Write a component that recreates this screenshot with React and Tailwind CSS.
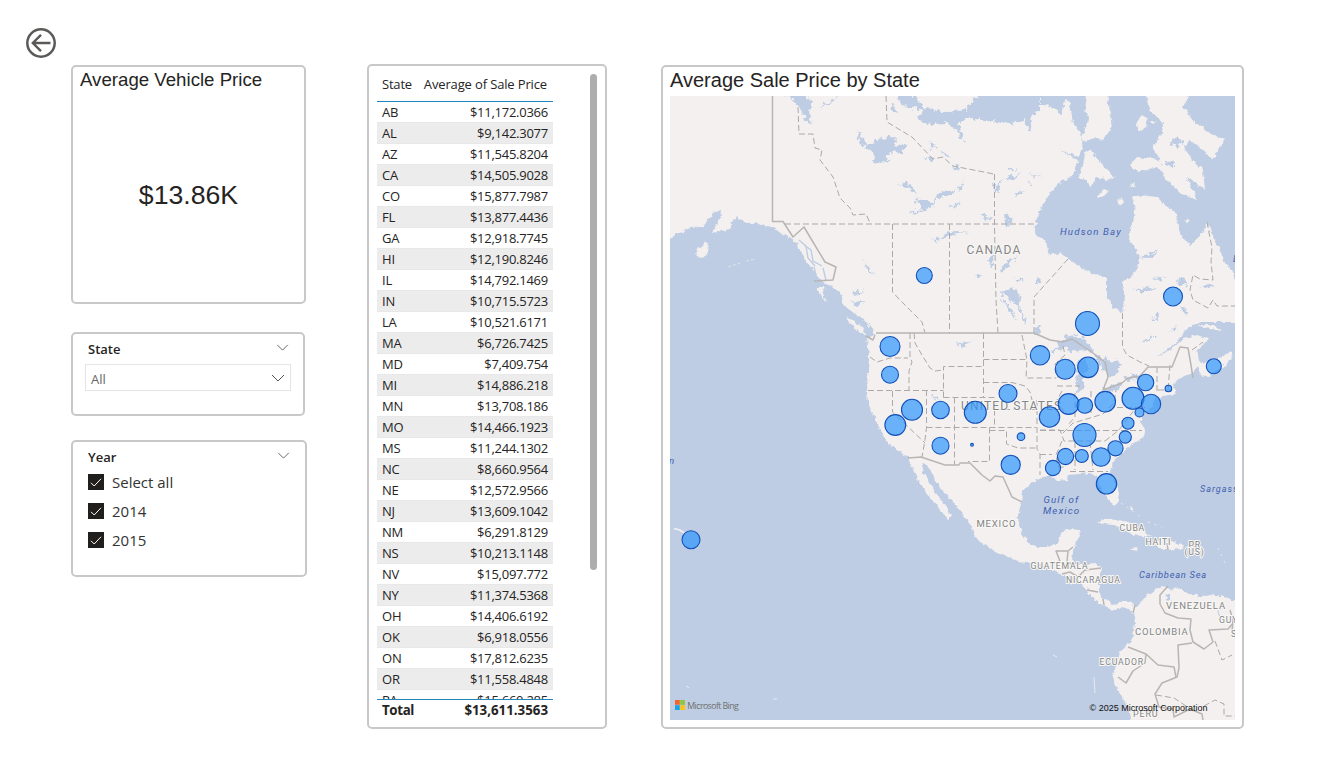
import React from "react";

const rows = [
  ["AB", "$11,172.0366"], ["AL", "$9,142.3077"], ["AZ", "$11,545.8204"], ["CA", "$14,505.9028"],
  ["CO", "$15,877.7987"], ["FL", "$13,877.4436"], ["GA", "$12,918.7745"], ["HI", "$12,190.8246"],
  ["IL", "$14,792.1469"], ["IN", "$10,715.5723"], ["LA", "$10,521.6171"], ["MA", "$6,726.7425"],
  ["MD", "$7,409.754"], ["MI", "$14,886.218"], ["MN", "$13,708.186"], ["MO", "$14,466.1923"],
  ["MS", "$11,244.1302"], ["NC", "$8,660.9564"], ["NE", "$12,572.9566"], ["NJ", "$13,609.1042"],
  ["NM", "$6,291.8129"], ["NS", "$10,213.1148"], ["NV", "$15,097.772"], ["NY", "$11,374.5368"],
  ["OH", "$14,406.6192"], ["OK", "$6,918.0556"], ["ON", "$17,812.6235"], ["OR", "$11,558.4848"],
  ["PA", "$15,660.285"],
];

// [x, y, radius]
const bubbles = [
  [924.3, 275.5, 8], [1173, 296.5, 9.5], [1087.5, 323.5, 12], [890, 346.5, 10], [890, 374.7, 8.5],
  [1040, 355.3, 9.7], [1065.2, 369.3, 10], [1088, 367.3, 10.3], [1213.8, 366.3, 7.5], [1145.6, 382.5, 8.2],
  [1168.4, 388.5, 3.3], [1008, 393.5, 9], [912, 409.7, 10.5], [895.3, 425, 10.4], [940.5, 410, 8.8],
  [975.3, 412.3, 11], [1049.5, 417, 10.2], [1068.6, 404, 10.4], [1084.8, 405.5, 7.8], [1105.2, 401.7, 10.3],
  [1133, 398.3, 11], [1151, 404, 9.7], [1139.5, 412.5, 4.5], [1128, 423.2, 6], [1125.3, 437, 6.1],
  [1115.5, 448.3, 7.6], [1084.5, 435, 11.5], [1065.5, 456.5, 8.1], [1081.8, 456, 6.5], [1101, 457, 9.3],
  [1053, 468, 7.6], [1106.5, 483.8, 10.2], [940.5, 445.7, 8.5], [972, 444.8, 1.4], [1021, 436.7, 3.8],
  [1010.7, 464.8, 9.6], [691, 539.8, 9],
];

const land = [
  // Mainland, from Alaska round the Pacific, the Gulf and the Atlantic coasts
  "M660 86L660 243L680 232L690 228L703 227L713 213L722 210L720 218L715 227L712 233L730 229L736 216L742 222L753 223L772 227L785 235L797 243L803 257L813 270L823 282L833 287L840 293L843 306L850 310L867 323L875 335L867 338L869 357L868 373L867 390L868 403L875 418L880 430L888 443L898 450L908 458L913 470L918 480L925 490L932 500L942 512L948 519L951 517L947 507L938 497L932 487L925 475L921 463L928 465L935 480L945 493L957 507L967 520L972 528L973 533L977 540L993 550L1010 558L1025 563L1037 562L1050 570L1063 575L1077 578L1085 588L1092 598L1103 605L1113 611L1120 607L1128 608L1135 615L1135 623L1133 637L1128 645L1120 652L1118 660L1113 675L1115 687L1123 698L1130 713L1133 730L1245 730L1245 606L1228 598L1217 595L1200 596L1187 593L1177 587L1172 590L1163 587L1155 590L1145 597L1137 607L1130 602L1120 602L1113 605L1103 598L1099 592L1099 580L1101 568L1095 563L1083 565L1072 564L1073 550L1077 540L1081 531L1073 529L1062 531L1058 543L1047 547L1037 547L1028 542L1022 533L1017 520L1020 507L1022 502L1021 492L1032 483L1043 477L1050 475L1057 481L1067 480L1068 475L1080 474L1090 473L1097 477L1100 487L1108 498L1114 507L1118 503L1119 493L1115 483L1110 472L1113 462L1122 453L1132 444L1144 437L1145 430L1140 423L1143 415L1152 407L1155 398L1163 396L1175 394L1177 390L1172 387L1177 380L1192 373L1198 366L1202 376L1207 377L1222 367L1233 358L1223 361L1213 358L1203 364L1199 361L1197 350L1205 343L1208 338L1197 335L1183 339L1170 350L1157 357L1177 342L1187 328L1200 322L1245 322L1245 285L1235 280L1232 270L1223 260L1220 250L1213 237L1207 222L1203 233L1190 245L1183 238L1178 228L1177 213L1167 207L1157 197L1140 195L1132 197L1135 210L1133 223L1128 238L1137 250L1139 260L1135 273L1122 282L1125 300L1123 313L1113 307L1107 295L1107 277L1090 273L1073 262L1060 253L1050 255L1045 240L1036 237L1035 230L1037 217L1043 203L1057 185L1073 175L1078 160L1060 150L1079 157L1083 147L1080 133L1073 123L1070 103L1065 100L1062 115L1053 107L1040 104L1040 86Z",
  // Melville peninsula, Southampton, Baffin
  "M1088 86L1108 86L1109 105L1112 128L1103 140L1094 138L1085 142L1081 138L1089 120L1085 110Z",
  "M1085 152L1091 150L1100 163L1108 170L1115 177L1107 180L1097 177L1090 187L1086 180L1078 178L1083 166Z",
  "M1143 86L1193 86L1183 107L1193 120L1207 132L1225 140L1218 150L1212 160L1203 150L1190 140L1183 147L1193 160L1203 170L1205 190L1187 177L1198 200L1180 193L1167 180L1158 167L1137 172L1130 165L1137 157L1160 160L1152 148L1162 133L1163 123L1150 110Z",
  "M1136 122L1142 115L1148 118L1146 127L1139 131Z",
  "M1097 197L1104 189L1109 191L1103 197Z M1118 201L1122 197L1123 203L1120 206Z M1130 186L1135 182L1134 187Z M1150 121L1157 121L1153 124Z M1185 221L1189 218L1188 223Z",
  // Kodiak, Haida Gwaii, Vancouver Island
  "M695 252L706 242L709 246L708 253L700 259Z M817 287L825 287L822 294L827 303L820 295Z M845 317L852 320L860 325L867 336L858 331L851 325Z",
  "M1197 325L1214 325L1222 331L1210 329Z M1185 365L1192 363L1198 366L1190 367Z",
  "M1199 366L1206 364L1214 362L1222 357L1230 352L1233 356L1226 364L1213 372L1203 377L1199 373Z",
  // Caribbean
  "M1094 523L1107 518L1127 523L1153 537L1133 535L1117 526L1100 523Z M1152 543L1163 538L1183 545L1182 549L1165 550Z M1129 549L1138 548L1136 551Z M1190 549L1201 548L1200 551Z M1130 508L1132 506L1133 511Z",
];

const lakes = [
  // Arctic channels
  "M782 90L802 90L812 104L808 114L800 107Z M893 92L908 92L925 107L945 112L966 110L975 98L990 92L1040 92L1040 112L1030 116L1032 132L1023 120L1008 124L984 120L966 118L958 123L965 143L950 123L924 124L917 117L924 111L902 105Z",
  "M802 110L808 108L812 122L808 125L804 117Z M819 109L832 99L838 96L828 105Z",
  // Great Bear, Great Slave, Athabasca
  "M864 147L880 138L897 136L894 145L906 144L902 154L890 152L886 162L874 163L875 155Z M856 129L861 135L867 148L861 144Z M896 112L893 104L890 109Z",
  "M908 212L922 209L916 199L932 202L940 192L958 190L948 196L936 199L932 207L921 210L917 214Z M899 185L906 182L914 188L916 192L908 189Z M957 190L963 182L965 174L962 188Z",
  "M942 236L951 231L971 233L955 234L945 238Z M1001 270L1007 262L1016 256L1010 264L1003 272Z M934 240L940 237L938 243Z",
  "M1001 292L1010 288L1018 291L1021 302L1017 308L1012 302L1006 297Z M1000 296L1008 304L1017 321L1008 310Z M1015 300L1026 320L1024 323Z M1034 328L1040 326L1041 334L1035 333Z",
  "M994 185L1001 180L1000 189L995 194Z M1006 169L1018 169L1009 172Z M1028 172L1044 178L1033 175Z M1004 178L1020 174L1010 181Z M1014 193L1023 191L1018 196Z M1028 182L1036 188L1030 186Z M1005 214L1012 217L1010 227L1006 222Z M980 214L992 218L986 222Z M951 168L962 165L957 171Z M949 207L960 202L955 208Z M941 150L951 158L946 158Z M930 142L935 145L931 151Z M924 157L934 158L931 161Z M989 259L994 250L993 264L990 268Z M976 276L982 274L979 278Z M1014 278L1023 279L1018 283Z M1036 280L1043 278L1038 286Z M863 259L870 269L875 278L866 267Z M850 292L864 290L856 296Z M852 302L866 301L857 306Z M955 343L971 342L961 346Z M931 393L937 398L938 401L933 397Z M854 313L862 318L873 330L861 321Z",
  "M1138 257L1149 254L1159 250L1150 258Z M1132 290L1145 287L1158 289L1145 292Z M1153 278L1167 276L1159 280Z M1175 282L1183 277L1189 285L1179 286Z M1201 287L1209 284L1216 286L1208 289Z M1152 320L1160 312L1157 320Z M1181 308L1188 309L1185 317Z M1142 340L1156 336L1148 342Z M1170 332L1177 325L1175 330Z M1173 136L1182 139L1179 147L1171 145Z M1163 160L1173 161L1173 168L1166 166Z M1101 145L1111 143L1107 149Z",
  // Alaska inlets
  "M690 232L703 226L710 229L699 240L684 244L681 240Z M715 220L722 212L719 216Z",
  // Great Lakes
  "M1050 352L1060 343L1068 335L1083 337L1093 348L1091 352L1080 350L1070 352L1064 347L1053 353Z M1078 362L1088 357L1087 368L1083 378L1083 390L1077 391L1076 377Z M1093 355L1101 357L1110 362L1120 360L1118 373L1108 378L1104 370L1100 365Z M1103 390L1113 385L1120 383L1123 386L1112 392Z M1124 378L1131 375L1140 375L1138 380L1127 381Z",
  "M1167 593L1172 597L1170 603L1166 599Z M1218 610L1222 607L1219 615Z M1086 587L1095 592L1091 591Z",
];

const dashed = [
  "M785 224H1035", "M892.5 224V292L900 300L913 313L922 322L925 333", "M949.5 224V333", "M994.5 174V224L996 300L998 333",
  "M1068 259L1034 297V333", "M886 96L887 122L912 137L933 159L943 157L953 166L994 174",
  "M798 107L799 134H813L815 148L822 150L820 160L833 177L840 198L850 208L853 215L866 214L870 223",
  "M870 357L877 362L890 358L908 358", "M910 333V357L912 362L909 371V390", "M868 390.5H943.5",
  "M914 333L915 343L922 355L930 368L935 371L943 370", "M943.5 397.5V366.5H983.5", "M943.5 397.5H994.5V427.5", "M983.5 333V397.5",
  "M983.5 359.5H1027", "M983.5 382.5H1012L1025 386L1030 392L1032 400", "M1022 335L1027 360L1026 378H1056",
  "M926.5 390V427.5L925 440L922 457", "M892.5 391V412L925 443", "M926.5 427.5H1036", "M954.5 397.5V465", "M989.5 427.5V461.5H968",
  "M989.5 430.5H1006.5V444L1018 448H1036", "M995 409.5H1036", "M1037 400V449L1040 454V475", "M1040 430.5H1142", "M1040 454.5H1052",
  "M1040 430L1060 430L1064 441H1105", "M1062 441L1056 455L1058 467H1064", "M1075 442V470", "M1090 442L1093 470", "M1070 471.5H1108",
  "M1063 433L1073 423L1090 418L1103 414L1114 403L1116 390", "M1117 407.5H1145", "M1157 367V393", "M1170 365L1168 390", "M1158 390H1172",
  "M1057 386H1080", "M1091 391V413", "M1075 393V417L1068 425", "M1062 391L1057 400L1065 414", "M1105 441L1119 430L1135 409",
  "M1122.5 313V347L1127 355L1140 362L1149 366", "M1063 346L1065 355L1055 364L1058 378",
  "M1207 222L1210 238L1212 247L1211 262L1213 280L1200 279L1193 275L1190 290L1193 300L1208 308L1213 300L1217 306H1235",
  "M1215 641L1222 660L1232 655", "M1156 695L1174 698L1186 706", "M1204 706L1215 700L1224 704L1224 716H1235", "M1192 350L1203 342",
];

const borders = [
  "M772.5 96V221.5L783 221.5L793 237L804 227L810 237L825 262L836 267L833 280L814 281", "M876 333H1034L1050 340L1063 342L1072 339L1093 353L1105 362L1108 377L1103 390L1122 383L1128 378L1140 376L1148 367H1172L1180 347L1188 348L1191 365L1193 378",
  "M866 336L873 340L875 335",
  "M908 458L921 457L945 465H959L960 463H970L982 475L990 481L995 476L1003 477L1012 497L1022 502",
  "M1073 547L1068 551L1056 551L1060 561L1052 564M1068 551L1067 562L1072 564M1062 574L1070 572L1078 577L1085 570L1101 568M1087 590L1098 592M1103 599L1104 605M1135 605L1133 613",
  "M1168 586L1160 595L1160 604L1165 613L1178 618L1191 619L1190 630L1193 642L1204 649L1213 642L1209 630L1228 629L1235 621", "M1192 643L1178 645L1179 668L1177 677L1162 683L1155 694L1159 707L1173 709L1174 717L1190 709L1202 714L1203 720",
  "M1128 647L1146 654L1158 665L1174 667L1176 677M1146 654L1145 663L1133 671L1126 683L1118 677", "M1230 610L1233 620L1232 632L1238 641", "M1167 543L1168 550",
];

// [text, x, y, size, letter spacing, water label]
const labels = [
  ["CANADA", 966.5, 254, 12, 1.2], ["UNITED STATES", 961, 410, 12, 1.15], ["MEXICO", 976.5, 527, 9.5, 0.8],
  ["GUATEMALA", 1030.5, 569, 8.7, 0.85], ["NICARAGUA", 1066, 583, 8.7, 0.75], ["CUBA", 1119.5, 531, 8.7, 0.8],
  ["HAITI", 1145.5, 545, 8.7, 0.8], ["PR", 1188.5, 547.5, 8.7, 0.8], ["(US)", 1184.5, 555, 8.7, 0.8],
  ["VENEZUELA", 1166, 609, 9.5, 0.85], ["COLOMBIA", 1135, 635, 9.5, 0.8], ["ECUADOR", 1099.5, 665, 8.7, 0.8],
  ["PERU", 1133, 717, 9, 0.8], ["GUYANA", 1219, 623, 8.7, 0.8], ["S", 1231, 637, 8.7, 0.8],
  ["Hudson Bay", 1060, 235, 9.7, 1.15, true], ["Gulf of", 1043.5, 503, 9.7, 1.1, true], ["Mexico", 1043, 514, 9.7, 1.15, true],
  ["Sargasso Sea", 1200, 492, 9, 1, true], ["Caribbean Sea", 1139, 578, 9.3, 0.75, true], ["n", 669, 464, 9.7, 0, true], ["L", 1233, 262, 9.7, 0, true],
];

function Chevron({ className }) {
  return (
    <svg className={className} viewBox="0 0 14 8" fill="none" stroke="#555" strokeWidth="1">
      <path d="M1 1L7 7L13 1" />
    </svg>
  );
}

function BackButton() {
  return (
    <svg className="block h-[30px] w-[30px]" viewBox="0 0 30 30" fill="none" stroke="#5c5a58">
      <circle cx="15" cy="15" r="13.7" strokeWidth="2.5" />
      <path d="M24.5 15H7.5M15 6.8L6.8 15L15 23.2" strokeWidth="2.4" />
    </svg>
  );
}

function CheckRow({ label }) {
  return (
    <div className="flex h-[29px] items-center gap-2 text-[15px] leading-5 text-[#333]">
      <svg className="h-4 w-4" viewBox="0 0 16 16" fill="none">
        <rect width="16" height="16" fill="#201f1e" />
        <path d="M3 8.8L6.2 12L13 4.8" stroke="#fff" />
      </svg>
      <span className="pt-px">{label}</span>
    </div>
  );
}

function MapView() {
  return (
    <svg className="block h-[624px] w-[565px]" viewBox="670 96 565 624" fontFamily="Roboto, sans-serif">
      <defs>
        <filter id="coast" filterUnits="userSpaceOnUse" x="660" y="86" width="585" height="644" colorInterpolationFilters="sRGB">
          <feTurbulence type="fractalNoise" baseFrequency="0.2" numOctaves="3" seed="4" result="noise" />
          <feDisplacementMap in="SourceGraphic" in2="noise" scale="5" xChannelSelector="R" yChannelSelector="G" />
        </filter>
        <filter id="shore" filterUnits="userSpaceOnUse" x="660" y="86" width="585" height="644" colorInterpolationFilters="sRGB">
          <feTurbulence type="fractalNoise" baseFrequency="0.22" numOctaves="3" seed="9" result="noise" />
          <feDisplacementMap in="SourceGraphic" in2="noise" scale="9" xChannelSelector="R" yChannelSelector="G" />
        </filter>
      </defs>
      <rect x="670" y="96" width="565" height="624" fill="#becde3" />
      <g fill="#f3f0ef" filter="url(#coast)">
        {land.map((d) => <path key={d} d={d} />)}
      </g>
      <g fill="#becde3" filter="url(#shore)">
        {lakes.map((d) => <path key={d} d={d} />)}
      </g>
      <g fill="none" stroke="#f3f0ef">
        <path d="M674 528.5L680 530L686 534" strokeWidth="1.6" />
        <path d="M728 267L741 263M746 261L756 259" strokeWidth="0.6" strokeDasharray="3 2" />
        <path d="M1053 655L1057 657M773 699L777 699M686 686L689 688M1094 677L1095 693" strokeWidth="1" opacity=".8" />
        <path d="M799 240L806 246L808 258L815 266M804 245L811 250L813 261L822 266M814 267L817 280M823 268L826 280" stroke="#becde3" strokeWidth="1.4" />
        <path d="M1121 503L1141 517M1148 522L1162 527M1218 548L1226 565" strokeWidth="0.8" strokeDasharray="2 5" />
      </g>
      <g fill="none" stroke="#aca9a7" strokeWidth="1" strokeDasharray="6 3">
        {dashed.map((d) => <path key={d} d={d} />)}
      </g>
      <g fill="none" stroke="#b8b5b3" strokeWidth="1.5" strokeLinejoin="round">
        {borders.map((d) => <path key={d} d={d} />)}
      </g>
      {labels.map(([text, x, y, size, spacing, water]) => (
        <text
          key={text} x={x} y={y} fontSize={size} letterSpacing={spacing}
          fontStyle={water ? "italic" : "normal"} fontWeight={400}
          fill={water ? "#3f60b0" : "#858585"} stroke={water ? "none" : "#f8f7f6"}
          strokeWidth="2" paintOrder="stroke"
        >
          {text}
        </text>
      ))}
      <g fill="#2d96fc" fillOpacity=".7" stroke="#124fb8" strokeWidth="1.1">
        {bubbles.map(([x, y, r]) => <circle key={`${x}-${y}`} cx={x} cy={y} r={r} />)}
      </g>
      <path fill="#f1652b" d="M675 700h4.8v4.8h-4.8z" />
      <path fill="#8dc63f" d="M680.2 700h4.8v4.8h-4.8z" />
      <path fill="#17a5e6" d="M675 705.2h4.8v4.8h-4.8z" />
      <path fill="#fcc514" d="M680.2 705.2h4.8v4.8h-4.8z" />
      <text x="687.3" y="709" fontSize="8.8" fontFamily="'Open Sans', sans-serif" fill="#6f6f6f" textLength="51.5">Microsoft Bing</text>
      <text x="1089.5" y="711" fontSize="9" fontFamily="'Liberation Sans', Arial, sans-serif" fill="#111" textLength="118">© 2025 Microsoft Corporation</text>
    </svg>
  );
}

export default function App() {
  return (
    <main className="flex h-[766px] w-[1323px] items-start overflow-hidden bg-white font-['Open_Sans','Noto_Sans',sans-serif] text-[#252423]">
      <div className="ml-[26px] mt-7 w-[30px] shrink-0">
        <BackButton />
      </div>

      <div className="ml-[15px] mt-[65px] flex w-[236px] shrink-0 flex-col">
        <section className="flex h-[239px] w-[235px] flex-col rounded-[5px] border-2 border-[#c8c8c8] px-[7px] font-['Liberation_Sans',Arial,sans-serif]">
          <h2 className="whitespace-nowrap pt-px text-[18.67px] leading-[24px]">Average Vehicle Price</h2>
          <div className="pt-[86px] text-center text-[26.67px] leading-[34px]">$13.86K</div>
        </section>

        <section className="mt-7 h-[84px] w-[234px] rounded-[5px] border-2 border-[#c8c8c8] px-3 pt-[7px]">
          <div className="flex items-center justify-between pl-[3px] pr-0.5 text-[13px] font-semibold leading-4">
            <span>State</span>
            <Chevron className="mb-1 h-[7px] w-[13px]" />
          </div>
          <div className="mt-[7px] flex h-[27px] w-[206px] items-center justify-between border border-[#e5e5e5] pl-[5px] pr-[5px] text-[13px] leading-4 text-[#666]">
            <span className="pt-[2px]">All</span>
            <Chevron className="h-[8px] w-[14px]" />
          </div>
        </section>

        <section className="mt-6 h-[137px] w-[236px] rounded-[5px] border-2 border-[#c8c8c8] px-[15px] pt-[7px]">
          <div className="flex items-center justify-between text-[13px] font-semibold leading-4">
            <span>Year</span>
            <Chevron className="mb-1 h-[7px] w-[13px]" />
          </div>
          <div className="mt-[2px] flex flex-col">
            <CheckRow label="Select all" />
            <CheckRow label="2014" />
            <CheckRow label="2015" />
          </div>
        </section>
      </div>

      <section className="ml-[60px] mt-16 flex h-[665px] w-[240px] shrink-0 justify-between rounded-[5px] border-2 border-[#c8c8c8] pl-2 pr-2 text-[13px]">
        <div className="flex w-[176px] flex-col">
          <div className="flex h-[35px] items-center justify-between pl-[5px] pr-[6px] leading-4">
            <span className="tracking-[-0.2px]">State</span>
            <span className="whitespace-nowrap tracking-[-0.14px]">Average of Sale Price</span>
          </div>
          <div className="h-px bg-[#2386bd]" />
          <div className="h-[597px] overflow-hidden">
            {rows.map(([state, price]) => (
              <div key={state} className="flex h-[21px] items-center justify-between border-b border-[#e8e8e8] pl-[5px] pr-[5px] leading-4 even:bg-[#ececec]">
                <span className="tracking-[-0.2px]">{state}</span>
                <span className="tracking-[-0.25px]">{price}</span>
              </div>
            ))}
          </div>
          <div className="h-px bg-[#2386bd]" />
          <div className="flex h-[21px] items-center justify-between pb-px pl-[5px] pr-[5px] text-[13.3px] font-bold leading-4">
            <span className="tracking-[-0.35px]">Total</span>
            <span>$13,611.3563</span>
          </div>
        </div>
        <div className="mt-2 h-[496px] w-[7px] rounded-full bg-[#adadad]" />
      </section>

      <section className="ml-[54px] mt-[65px] h-[664px] w-[583px] shrink-0 rounded-[5px] border-2 border-[#c8c8c8] px-[7px]">
        <h2 className="h-[29px] whitespace-nowrap pt-[1px] font-['Liberation_Sans',Arial,sans-serif] text-[20px] leading-[24px]">Average Sale Price by State</h2>
        <MapView />
      </section>
    </main>
  );
}
